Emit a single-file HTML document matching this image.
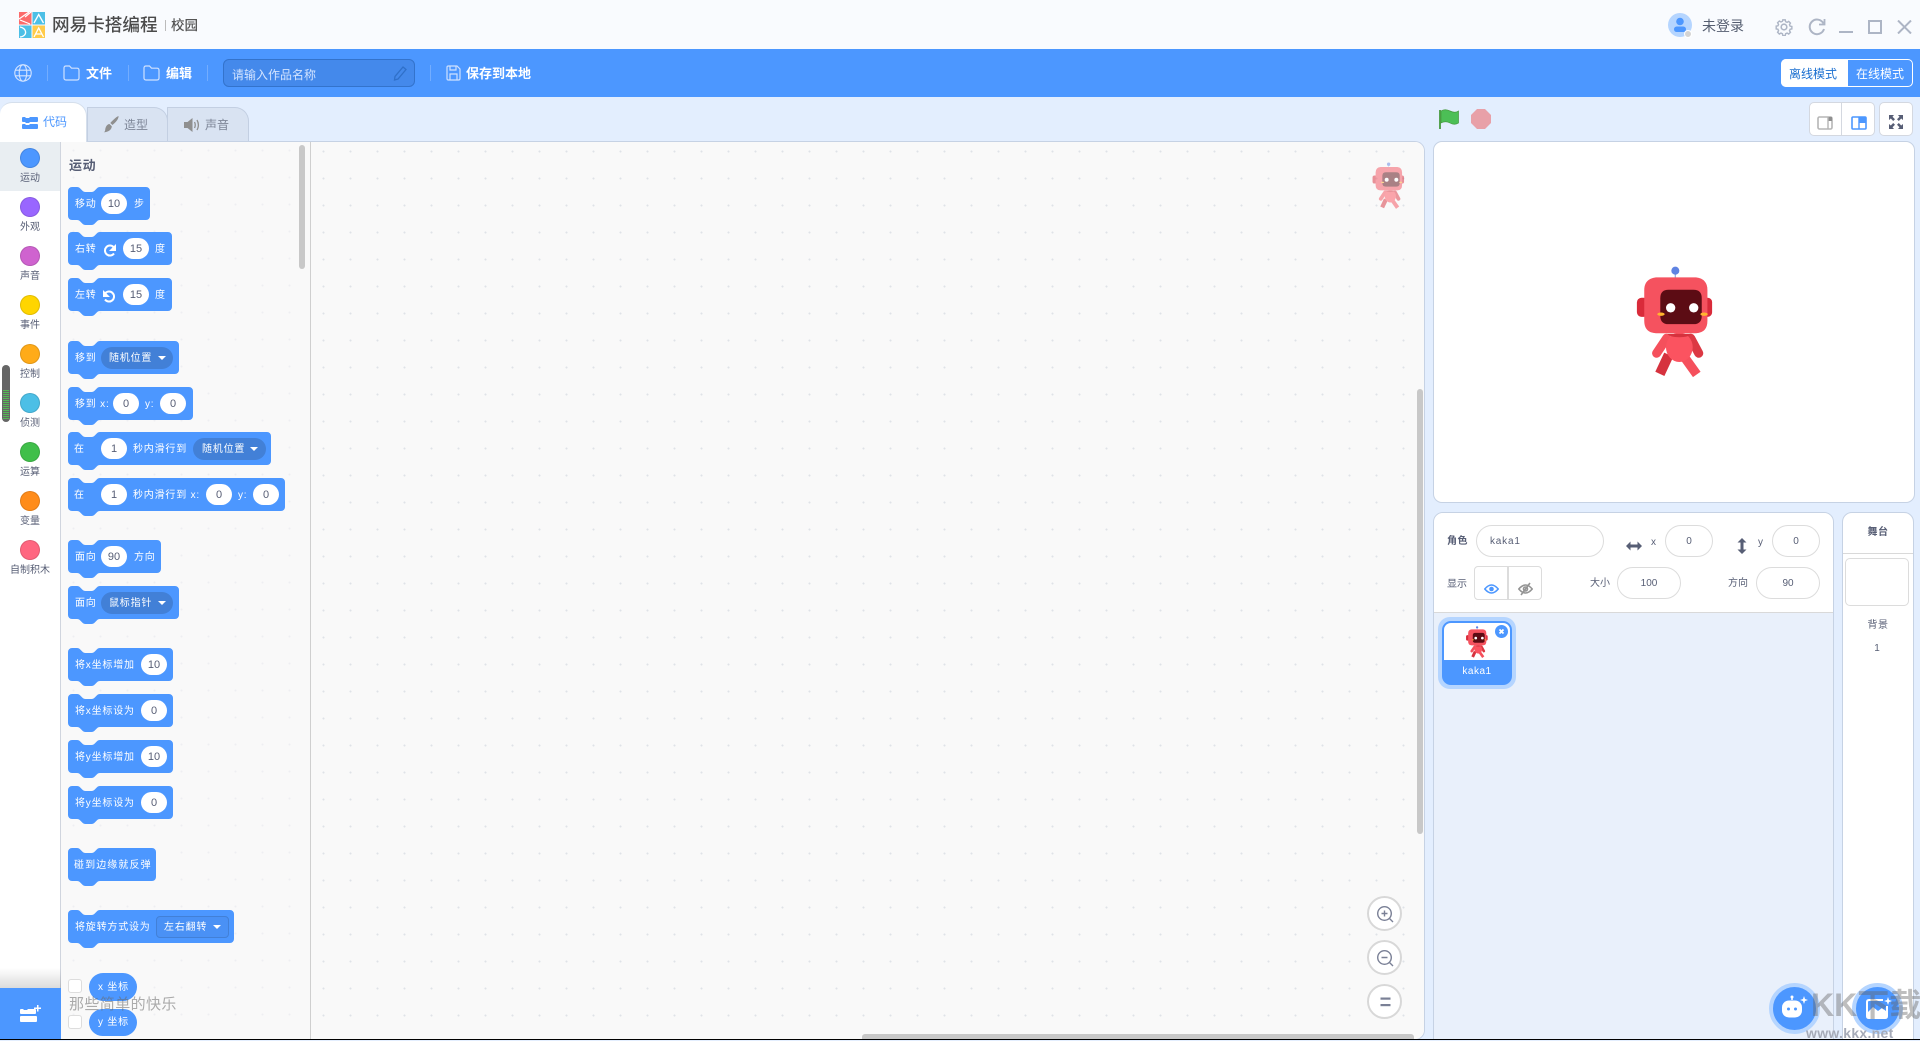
<!DOCTYPE html>
<html lang="zh"><head><meta charset="utf-8"><title>网易卡搭编程</title>
<style>
*{box-sizing:border-box}
html,body{margin:0;padding:0;width:1920px;height:1040px;overflow:hidden;background:#e3eefe;font-family:"Liberation Sans","WenQuanYi Zen Hei","Noto Sans CJK SC",sans-serif;color:#575e75}
.a,.t,.b,.i,.d,.s,svg{position:absolute}
.t{font-size:10px;line-height:12px;white-space:nowrap}
.b{left:68px;height:38px}
.b svg{left:0;top:0;overflow:visible}
.b .t{color:#fff;letter-spacing:.8px;top:12px}
.i{top:6px;height:21px;width:26px;background:#fff;border-radius:11px;color:#575e75;font-size:11px;line-height:22px;text-align:center}
.d{top:6px;height:22px;background:#4280d7;border-radius:11px}
.s{border-style:solid;border-width:4px 4px 0;border-color:#fff transparent transparent;top:15px}
.c{position:absolute;left:20px;width:20px;height:20px;border-radius:50%;border:1px solid rgba(0,0,0,.12)}
.l{position:absolute;left:0;width:60px;text-align:center;font-size:10px;line-height:12px;color:#575e75}
.f{position:absolute;height:32px;border:1.5px solid #dcdcdc;border-radius:16px;background:#fff;font-size:10px;line-height:31px;text-align:center;color:#575e75}
.v{width:1px;height:16px;top:65px;background:rgba(255,255,255,.22);position:absolute}
.z{position:absolute;left:1367px;width:35px;height:35px;border-radius:50%;background:#fff;border:2px solid #d8d8d8}
</style></head><body>

<!-- hidden symbol -->
<svg width="0" height="0" style="position:absolute"><defs>
<symbol id="robot" viewBox="100 70 250 350">
<path d="M226 118V100" stroke="#9db2de" stroke-width="4"/><circle cx="226" cy="93" r="12" fill="#5f83e2"/>
<rect x="111" y="174" width="34" height="57" rx="14" fill="#d92b3a"/><rect x="305" y="174" width="31" height="57" rx="13" fill="#d92b3a"/>
<path d="M200 358L186 388" stroke="#d6323e" stroke-width="30" stroke-linecap="square"/>
<path d="M200 295L170 340" stroke="#f5505c" stroke-width="27" stroke-linecap="round"/>
<path d="M272 295L296 340" stroke="#dc3843" stroke-width="27" stroke-linecap="round"/>
<path d="M252 350L282 392" stroke="#f5505c" stroke-width="28" stroke-linecap="square"/>
<ellipse cx="238" cy="322" rx="40" ry="44" fill="#fb5360"/>
<path d="M202 282h72q-8 10-36 10t-36-10z" fill="#d6323e"/>
<path d="M168 113h120q34 4 34 38v92q0 35-34 37H168q-35-2-35-37v-92q0-34 35-38z" fill="#f5525f"/>
<path d="M206 150h74q25 0 25 25v53q0 25-25 25h-74q-25 0-25-25v-53q0-25 25-25z" fill="#5c0c14"/>
<circle cx="212" cy="204" r="14" fill="#fff"/><circle cx="281" cy="204" r="14" fill="#fff"/>
<ellipse cx="183" cy="223" rx="11" ry="5" fill="#ffb52e"/><ellipse cx="312" cy="223" rx="11" ry="5" fill="#ffb52e"/>
</symbol>
</defs></svg>

<!-- title bar -->
<div class="a" style="left:0;top:0;width:1920px;height:49px;background:#f9fbfe"></div>
<svg style="left:19px;top:12px" width="26" height="26" viewBox="0 0 26 26">
<rect width="12.5" height="12.5" fill="#fb6b6b"/><rect x="13.5" width="12.5" height="12.5" fill="#4cbfe6"/><rect y="13.5" width="12.5" height="12.5" fill="#4cbfe6"/><rect x="13.5" y="13.5" width="12.5" height="12.5" fill="#ffcb4a"/>
<path d="M0 7L10 0M1 8L11 12M6 5L12 0" stroke="#fff" stroke-width="1.2" fill="none"/>
<path d="M15 11L19.7 2.5L24.5 11" stroke="#fff" stroke-width="1.3" fill="none"/>
<path d="M1 15c7 1 8 9 0 10" stroke="#fff" stroke-width="1.3" fill="none"/>
<path d="M15 25L19.7 16L24.5 25M17 22h6" stroke="#fff" stroke-width="1.3" fill="none"/>
</svg>
<div class="t" style="left:52px;top:14px;font-size:17.6px;line-height:22px;font-weight:500;color:#4a4a4a;font-family:'Liberation Sans','Noto Sans CJK SC',sans-serif">网易卡搭编程</div>
<div class="a" style="left:165px;top:20px;width:1px;height:11px;background:#bbb"></div>
<div class="t" style="left:171px;top:18px;font-size:13.5px;line-height:16px;font-weight:500;color:#555;font-family:'Liberation Sans','Noto Sans CJK SC',sans-serif">校园</div>

<svg style="left:1668px;top:13px" width="26" height="26" viewBox="0 0 26 26"><circle cx="12" cy="12" r="12" fill="#b5d5ff"/><circle cx="12" cy="8.5" r="3.8" fill="#4c97ff"/><rect x="6" y="13.5" width="12" height="5.5" rx="2.7" fill="#4c97ff"/><circle cx="20" cy="21" r="3.5" fill="#d4d4d4" stroke="#fff"/></svg>
<div class="t" style="left:1702px;top:18px;font-size:14px;line-height:16px;color:#555e70">未登录</div>
<svg style="left:1775px;top:18px" width="18" height="18" viewBox="0 0 18 18" fill="none" stroke="#adb5c5" stroke-width="1.6"><circle cx="9" cy="9" r="2.8"/><path d="M7.6 1h2.8l.4 2 1.7.8 1.8-1.1 2 2-1.1 1.8.7 1.6 2 .4v2.8l-2 .4-.7 1.7 1.1 1.7-2 2-1.8-1.1-1.7.8-.4 2H7.6l-.4-2-1.7-.8-1.8 1.1-2-2 1.1-1.7-.7-1.7-2-.4V8.1l2-.4.7-1.6-1.1-1.8 2-2 1.8 1.1 1.7-.8z" transform="translate(1.1 1) scale(.88)"/></svg>
<svg style="left:1808px;top:18px" width="18" height="18" viewBox="0 0 18 18" fill="none" stroke="#adb5c5" stroke-width="2"><path d="M15.5 5.5A7.3 7.3 0 1 0 16 11"/><path d="M16.5 1v5.5H11" stroke-width="1.8"/></svg>
<div class="a" style="left:1839px;top:31px;width:14px;height:2px;background:#adb5c5"></div>
<div class="a" style="left:1868px;top:20px;width:14px;height:14px;border:2px solid #adb5c5"></div>
<svg style="left:1897px;top:20px" width="15" height="14" viewBox="0 0 15 14"><path d="M1 .5L14 13.5M14 .5L1 13.5" stroke="#adb5c5" stroke-width="2"/></svg>

<!-- toolbar -->
<div class="a" style="left:0;top:49px;width:1920px;height:48px;background:#4c97ff"></div>
<svg style="left:14px;top:64px" width="18" height="18" viewBox="0 0 18 18" fill="none" stroke="#d5e5ff" stroke-width="1.1"><circle cx="9" cy="9" r="8.2"/><ellipse cx="9" cy="9" rx="3.8" ry="8.2"/><path d="M1 6.2h16M1 11.8h16"/></svg>
<div class="v" style="left:47px"></div><div class="v" style="left:128px"></div><div class="v" style="left:207px"></div><div class="v" style="left:430px"></div>
<svg style="left:63px;top:65px" width="17" height="16" viewBox="0 0 17 16" fill="none" stroke="#cfe1ff" stroke-width="1.2"><path d="M1 3q0-2 2-2h3.500l2 2.200H14q2 0 2 2V13q0 2-2 2H3q-2 0-2-2z"/></svg>
<div class="t" style="left:86px;top:66px;font-size:13px;line-height:16px;font-weight:700;color:#fff">文件</div>
<svg style="left:143px;top:65px" width="17" height="16" viewBox="0 0 17 16" fill="none" stroke="#cfe1ff" stroke-width="1.2"><path d="M1 3q0-2 2-2h3.500l2 2.200H14q2 0 2 2V13q0 2-2 2H3q-2 0-2-2z"/></svg>
<div class="t" style="left:166px;top:66px;font-size:13px;line-height:16px;font-weight:700;color:#fff">编辑</div>
<div class="a" style="left:223px;top:59px;width:192px;height:28px;border-radius:6px;background:#4489eb;border:1px solid #3373cc"></div>
<div class="t" style="left:232px;top:68px;font-size:12px;line-height:14px;color:#d3e4ff">请输入作品名称</div>
<svg style="left:393px;top:66px" width="14" height="15" viewBox="0 0 14 15" fill="none" stroke="#2f70c9" stroke-width="1.3"><path d="M10 1l3 2.500L5 13l-3.500 1L2 10.400z"/></svg>
<svg style="left:446px;top:65px" width="15" height="16" viewBox="0 0 15 16" fill="none" stroke="#cfe1ff" stroke-width="1.2"><path d="M1 2.500q0-1.500 1.500-1.500H11l3 3v9.500q0 1.500-1.500 1.500h-10Q1 15 1 13.500zM4 1v4h6V1M4 15V9h7v6"/></svg>
<div class="t" style="left:466px;top:66px;font-size:13px;line-height:16px;font-weight:700;color:#fff">保存到本地</div>
<div class="a" style="left:1781px;top:59px;width:132px;height:28px;border:1px solid #fff;border-radius:5px;background:#4c97ff"></div>
<div class="a" style="left:1781px;top:59px;width:67px;height:28px;border-radius:5px 0 0 5px;background:#fff"></div>
<div class="t" style="left:1789px;top:67px;font-size:12px;line-height:14px;color:#1a6fd0">离线模式</div>
<div class="t" style="left:1856px;top:67px;font-size:12px;line-height:14px;color:#fff">在线模式</div>

<!-- tabs -->
<div class="a" style="left:167px;top:107px;width:82px;height:35px;background:#d9e3f2;border:1px solid #c3cfe2;border-bottom:0;border-radius:0 14px 0 0"></div>
<div class="a" style="left:87px;top:107px;width:81px;height:35px;background:#d9e3f2;border:1px solid #c3cfe2;border-bottom:0;border-radius:0 14px 0 0"></div>
<svg style="left:103px;top:116px" width="16" height="17" viewBox="0 0 16 17"><path d="M15.500 0c.5 3-3.500 7-6 9L7.300 7C9.500 4.500 13 1 15.500 0zM6.500 8l2.300 2.200c0 3-3 6-8 6 2-1 1-3 2-5 .7-1.600 2-3.200 3.700-3.200z" fill="#8f8f8f"/></svg>
<div class="t" style="left:124px;top:118px;font-size:12px;line-height:14px;color:#7d8597">造型</div>
<svg style="left:184px;top:117px" width="16" height="16" viewBox="0 0 16 16"><path d="M0 5h3.500L8.500 1v14l-5-4H0z" fill="#8f8f8f"/><path d="M10.500 5q1.500 3 0 6M13 3q2.800 5 0 10" stroke="#8f8f8f" stroke-width="1.300" fill="none"/></svg>
<div class="t" style="left:205px;top:118px;font-size:12px;line-height:14px;color:#7d8597">声音</div>

<!-- main left box -->
<div class="a" style="left:0;top:141px;width:1425px;height:899px;background:#fff;border:1px solid #c6d2e4;border-left:0;border-radius:0 10px 10px 0;overflow:hidden">
 <div class="a" style="left:60px;top:0;width:251px;height:900px;background-color:#f9f9f9;background-image:radial-gradient(circle,#eeeff2 .8px,transparent 1.2px);background-size:27px 27px;background-position:-1px -5px;border-left:1px solid #d0d5de;border-right:1px solid #cfcfcf"></div>
 <div class="a" style="left:310px;top:0;width:1114px;height:900px;background-color:#f9f9f9;background-image:radial-gradient(circle,#dfe2e8 .8px,transparent 1.200px);background-size:27px 27px;background-position:-1px -4px;border-left:1px solid #cfcfcf"></div>
</div>

<!-- active tab -->
<div class="a" style="left:0;top:102px;width:87px;height:40px;background:#fff;border:1px solid #d5dfec;border-left:0;border-bottom:0;border-radius:12px 14px 0 0"></div>
<svg style="left:22px;top:117px" width="16" height="12" viewBox="0 0 16 12" fill="#4c97ff"><path d="M0 1q0-1 1-1h2l1 1h3l1-1h7q1 0 1 1v3q0 1-1 1H8l-1 1H4L3 5H1Q0 5 0 4z"/><path d="M0 8q0-1 1-1h2l1 1h3l1-1h7q1 0 1 1v3q0 1-1 1H1q-1 0-1-1z"/></svg>
<div class="t" style="left:43px;top:115px;font-size:12px;line-height:14px;color:#4c97ff">代码</div>

<!-- stage controls -->
<svg style="left:1439px;top:108px" width="21" height="22" viewBox="0 0 21 22"><path d="M1 2v19" stroke="#45993d" stroke-width="1.800"/><path d="M2 3q4-2.500 9 0t8.500 0V15q-4 2.500-8.500 0T2 15z" fill="#4cbf56" stroke="#45993d" stroke-width=".7"/></svg>
<svg style="left:1471px;top:109px" width="20" height="20" viewBox="0 0 20 20"><path d="M6 0h8l6 6v8l-6 6H6l-6-6V6z" fill="#e8a0a8"/></svg>
<div class="a" style="left:1809px;top:102px;width:66px;height:34px;background:#fff;border:1px solid #d4d8e0;border-radius:5px"></div>
<div class="a" style="left:1841px;top:102px;width:1px;height:34px;background:#d4d8e0"></div>
<div class="a" style="left:1879px;top:102px;width:34px;height:34px;background:#fff;border:1px solid #d4d8e0;border-radius:5px"></div>
<svg style="left:1817px;top:116px" width="16" height="14" viewBox="0 0 16 14"><rect x="1" y="1" width="14" height="12" rx="1.500" fill="none" stroke="#b5b5b5" stroke-width="1.600"/><rect x="11" y="1" width="4" height="4" fill="#8f8f8f"/><path d="M11 1v12" stroke="#b5b5b5" stroke-width="1.400"/></svg>
<svg style="left:1851px;top:116px" width="16" height="14" viewBox="0 0 16 14"><rect x="1" y="1" width="14" height="12" rx="1" fill="#fff" stroke="#4c97ff" stroke-width="1.600"/><rect x="8" y="1" width="7" height="6" fill="#4c97ff"/><path d="M8 1v12" stroke="#4c97ff" stroke-width="1.400"/></svg>
<svg style="left:1889px;top:115px" width="14" height="14" viewBox="0 0 14 14" fill="#575e75"><path d="M0 0h5L3.500 1.800 6 4.200 4.200 6 1.800 3.500 0 5zM14 0v5L12.200 3.500 9.800 6 8 4.200l2.500-2.400L9 0zM0 14V9l1.800 1.500L4.200 8 6 9.800l-2.500 2.400L5 14zM14 14H9l1.500-1.800L8 9.800 9.800 8l2.400 2.500L14 9z"/></svg>

<!-- sidebar -->
<div class="a" style="left:0;top:142px;width:60px;height:49px;background:#e9eef2"></div>
<div class="c" style="top:148px;background:#4c97ff"></div><div class="l" style="top:173px">运动</div>
<div class="c" style="top:197px;background:#9966ff"></div><div class="l" style="top:222px">外观</div>
<div class="c" style="top:246px;background:#cf63cf"></div><div class="l" style="top:271px">声音</div>
<div class="c" style="top:295px;background:#ffd500"></div><div class="l" style="top:320px">事件</div>
<div class="c" style="top:344px;background:#ffab19"></div><div class="l" style="top:369px">控制</div>
<div class="c" style="top:393px;background:#4cbfe6"></div><div class="l" style="top:418px">侦测</div>
<div class="c" style="top:442px;background:#40bf4a"></div><div class="l" style="top:467px">运算</div>
<div class="c" style="top:491px;background:#ff8c1a"></div><div class="l" style="top:516px">变量</div>
<div class="c" style="top:540px;background:#ff6680"></div><div class="l" style="top:565px">自制积木</div>
<div class="a" style="left:2px;top:365px;width:8px;height:57px;border-radius:4px;background:#666;overflow:hidden"><div style="position:absolute;left:1px;right:1px;top:25px;height:29px;background:repeating-linear-gradient(#56b856 0 1px,#666 1px 2px)"></div></div>
<div class="a" style="left:0;top:968px;width:61px;height:20px;background:linear-gradient(rgba(0,0,0,0),rgba(0,0,0,.14))"></div>
<div class="a" style="left:0;top:988px;width:61px;height:51px;background:#4c97ff"></div>
<svg style="left:19px;top:1005px" width="23" height="20" viewBox="0 0 23 20" fill="#fff"><path d="M1 5q0-1 1-1h2l1 1h3l1-1h7q1 0 1 1v3q0 1-1 1H2Q1 9 1 8zM1 12q0-1 1-1h15q1 0 1 1v4q0 1-1 1H2q-1 0-1-1z"/><path d="M17 3h3V0h1.500v3H24v1.500h-2.500V7H20V4.500h-3z" transform="translate(-2 -.5)"/></svg>

<!-- palette -->
<div class="a" style="left:299px;top:145px;width:6px;height:124px;background:#c8c8c8;border-radius:3px"></div>
<div class="t" style="left:69px;top:158px;font-size:13px;line-height:16px;font-weight:700;color:#575e75;letter-spacing:.6px">运动</div>

<div class="b" style="top:187px"><svg width="82" height="38"><path fill="#4c97ff" d="M0 4a4 4 0 0 1 4-4h5c1.500 0 2.300.6 3 1.300l2.500 2.500c.8.8 1.500 1.200 3 1.200h6c1.500 0 2.200-.4 3-1.200l2.500-2.500C29.700.6 30.500 0 32 0H78a4 4 0 0 1 4 4v25a4 4 0 0 1-4 4H32c-1.500 0-2.300.6-3 1.300l-2.500 2.500c-.8.8-1.500 1.200-3 1.200h-6c-1.500 0-2.200-.4-3-1.200l-2.500-2.500C11.300 33.600 10.500 33 9 33H4a4 4 0 0 1-4-4z"/></svg>
<div class="t" style="left:7px">移动</div><div class="i" style="left:33px">10</div><div class="t" style="left:66px">步</div></div>

<div class="b" style="top:232px"><svg width="104" height="38"><path fill="#4c97ff" d="M0 4a4 4 0 0 1 4-4h5c1.500 0 2.300.6 3 1.300l2.500 2.500c.8.8 1.500 1.200 3 1.200h6c1.500 0 2.200-.4 3-1.200l2.500-2.500C29.700.6 30.500 0 32 0H100a4 4 0 0 1 4 4v25a4 4 0 0 1-4 4H32c-1.500 0-2.300.6-3 1.300l-2.500 2.500c-.8.8-1.500 1.200-3 1.200h-6c-1.500 0-2.200-.4-3-1.200l-2.500-2.500C11.300 33.600 10.500 33 9 33H4a4 4 0 0 1-4-4z"/><path d="M45.500 15A5 5 0 1 0 46 21.500" fill="none" stroke="#fff" stroke-width="2"/><path d="M48 12v7h-7z" fill="#fff"/></svg>
<div class="t" style="left:7px">右转</div><div class="i" style="left:55px">15</div><div class="t" style="left:87px">度</div></div>

<div class="b" style="top:278px"><svg width="104" height="38"><path fill="#4c97ff" d="M0 4a4 4 0 0 1 4-4h5c1.500 0 2.300.6 3 1.300l2.500 2.500c.8.8 1.500 1.200 3 1.200h6c1.500 0 2.200-.4 3-1.200l2.500-2.500C29.700.6 30.500 0 32 0H100a4 4 0 0 1 4 4v25a4 4 0 0 1-4 4H32c-1.500 0-2.300.6-3 1.300l-2.500 2.500c-.8.8-1.500 1.200-3 1.200h-6c-1.500 0-2.200-.4-3-1.200l-2.500-2.500C11.300 33.600 10.500 33 9 33H4a4 4 0 0 1-4-4z"/><path d="M37.500 15A5 5 0 1 1 37 21.500" fill="none" stroke="#fff" stroke-width="2"/><path d="M35 12v7h7z" fill="#fff"/></svg>
<div class="t" style="left:7px">左转</div><div class="i" style="left:55px">15</div><div class="t" style="left:87px">度</div></div>

<div class="b" style="top:341px"><svg width="111" height="38"><path fill="#4c97ff" d="M0 4a4 4 0 0 1 4-4h5c1.500 0 2.300.6 3 1.300l2.500 2.500c.8.8 1.500 1.200 3 1.200h6c1.500 0 2.200-.4 3-1.200l2.500-2.500C29.700.6 30.500 0 32 0H107a4 4 0 0 1 4 4v25a4 4 0 0 1-4 4H32c-1.500 0-2.300.6-3 1.300l-2.500 2.500c-.8.8-1.500 1.200-3 1.200h-6c-1.500 0-2.200-.4-3-1.200l-2.500-2.500C11.300 33.600 10.500 33 9 33H4a4 4 0 0 1-4-4z"/></svg>
<div class="t" style="left:7px">移到</div><div class="d" style="left:33px;width:72px"></div><div class="t" style="left:41px">随机位置</div><div class="s" style="left:90px"></div></div>

<div class="b" style="top:387px"><svg width="125" height="38"><path fill="#4c97ff" d="M0 4a4 4 0 0 1 4-4h5c1.500 0 2.300.6 3 1.300l2.500 2.500c.8.8 1.500 1.200 3 1.200h6c1.500 0 2.200-.4 3-1.200l2.500-2.500C29.700.6 30.500 0 32 0H121a4 4 0 0 1 4 4v25a4 4 0 0 1-4 4H32c-1.500 0-2.300.6-3 1.300l-2.500 2.500c-.8.8-1.500 1.200-3 1.200h-6c-1.500 0-2.200-.4-3-1.200l-2.500-2.500C11.300 33.600 10.500 33 9 33H4a4 4 0 0 1-4-4z"/></svg>
<div class="t" style="left:7px">移到 x:</div><div class="i" style="left:45px">0</div><div class="t" style="left:77px">y:</div><div class="i" style="left:92px">0</div></div>

<div class="b" style="top:432px"><svg width="203" height="38"><path fill="#4c97ff" d="M0 4a4 4 0 0 1 4-4h5c1.500 0 2.300.6 3 1.300l2.500 2.500c.8.8 1.500 1.200 3 1.200h6c1.500 0 2.200-.4 3-1.200l2.500-2.500C29.700.6 30.500 0 32 0H199a4 4 0 0 1 4 4v25a4 4 0 0 1-4 4H32c-1.500 0-2.300.6-3 1.300l-2.500 2.500c-.8.8-1.500 1.200-3 1.200h-6c-1.500 0-2.200-.4-3-1.200l-2.500-2.500C11.300 33.600 10.500 33 9 33H4a4 4 0 0 1-4-4z"/></svg>
<div class="t" style="left:6px">在</div><div class="i" style="left:33px">1</div><div class="t" style="left:65px">秒内滑行到</div><div class="d" style="left:125px;width:73px"></div><div class="t" style="left:134px">随机位置</div><div class="s" style="left:182px"></div></div>

<div class="b" style="top:478px"><svg width="217" height="38"><path fill="#4c97ff" d="M0 4a4 4 0 0 1 4-4h5c1.500 0 2.300.6 3 1.300l2.500 2.500c.8.8 1.500 1.200 3 1.200h6c1.500 0 2.200-.4 3-1.200l2.500-2.500C29.700.6 30.500 0 32 0H213a4 4 0 0 1 4 4v25a4 4 0 0 1-4 4H32c-1.500 0-2.300.6-3 1.300l-2.500 2.500c-.8.8-1.500 1.200-3 1.200h-6c-1.500 0-2.200-.4-3-1.200l-2.500-2.500C11.300 33.600 10.500 33 9 33H4a4 4 0 0 1-4-4z"/></svg>
<div class="t" style="left:6px">在</div><div class="i" style="left:33px">1</div><div class="t" style="left:65px">秒内滑行到 x:</div><div class="i" style="left:138px">0</div><div class="t" style="left:170px">y:</div><div class="i" style="left:185px">0</div></div>

<div class="b" style="top:540px"><svg width="93" height="38"><path fill="#4c97ff" d="M0 4a4 4 0 0 1 4-4h5c1.500 0 2.300.6 3 1.300l2.500 2.500c.8.8 1.500 1.200 3 1.200h6c1.500 0 2.200-.4 3-1.200l2.500-2.500C29.700.6 30.500 0 32 0H89a4 4 0 0 1 4 4v25a4 4 0 0 1-4 4H32c-1.500 0-2.300.6-3 1.300l-2.500 2.500c-.8.8-1.500 1.200-3 1.200h-6c-1.500 0-2.200-.4-3-1.200l-2.500-2.500C11.300 33.600 10.500 33 9 33H4a4 4 0 0 1-4-4z"/></svg>
<div class="t" style="left:7px">面向</div><div class="i" style="left:33px">90</div><div class="t" style="left:66px">方向</div></div>

<div class="b" style="top:586px"><svg width="111" height="38"><path fill="#4c97ff" d="M0 4a4 4 0 0 1 4-4h5c1.500 0 2.300.6 3 1.300l2.500 2.500c.8.8 1.500 1.200 3 1.200h6c1.500 0 2.200-.4 3-1.200l2.500-2.500C29.700.6 30.500 0 32 0H107a4 4 0 0 1 4 4v25a4 4 0 0 1-4 4H32c-1.500 0-2.300.6-3 1.300l-2.500 2.500c-.8.8-1.500 1.200-3 1.200h-6c-1.500 0-2.200-.4-3-1.200l-2.500-2.500C11.300 33.600 10.500 33 9 33H4a4 4 0 0 1-4-4z"/></svg>
<div class="t" style="left:7px">面向</div><div class="d" style="left:33px;width:72px"></div><div class="t" style="left:41px">鼠标指针</div><div class="s" style="left:90px"></div></div>

<div class="b" style="top:648px"><svg width="105" height="38"><path fill="#4c97ff" d="M0 4a4 4 0 0 1 4-4h5c1.500 0 2.300.6 3 1.300l2.500 2.500c.8.8 1.500 1.200 3 1.200h6c1.500 0 2.200-.4 3-1.200l2.500-2.500C29.700.6 30.500 0 32 0H101a4 4 0 0 1 4 4v25a4 4 0 0 1-4 4H32c-1.500 0-2.300.6-3 1.300l-2.500 2.500c-.8.8-1.500 1.200-3 1.200h-6c-1.500 0-2.200-.4-3-1.200l-2.500-2.500C11.300 33.600 10.500 33 9 33H4a4 4 0 0 1-4-4z"/></svg>
<div class="t" style="left:7px">将x坐标增加</div><div class="i" style="left:73px">10</div></div>

<div class="b" style="top:694px"><svg width="105" height="38"><path fill="#4c97ff" d="M0 4a4 4 0 0 1 4-4h5c1.500 0 2.300.6 3 1.300l2.500 2.500c.8.8 1.500 1.200 3 1.200h6c1.500 0 2.200-.4 3-1.200l2.500-2.500C29.700.6 30.500 0 32 0H101a4 4 0 0 1 4 4v25a4 4 0 0 1-4 4H32c-1.500 0-2.300.6-3 1.300l-2.500 2.500c-.8.8-1.500 1.200-3 1.200h-6c-1.500 0-2.200-.4-3-1.200l-2.500-2.500C11.300 33.600 10.500 33 9 33H4a4 4 0 0 1-4-4z"/></svg>
<div class="t" style="left:7px">将x坐标设为</div><div class="i" style="left:73px">0</div></div>

<div class="b" style="top:740px"><svg width="105" height="38"><path fill="#4c97ff" d="M0 4a4 4 0 0 1 4-4h5c1.500 0 2.300.6 3 1.300l2.500 2.500c.8.8 1.500 1.200 3 1.200h6c1.500 0 2.200-.4 3-1.200l2.500-2.500C29.700.6 30.500 0 32 0H101a4 4 0 0 1 4 4v25a4 4 0 0 1-4 4H32c-1.500 0-2.300.6-3 1.300l-2.500 2.500c-.8.8-1.500 1.200-3 1.200h-6c-1.500 0-2.200-.4-3-1.200l-2.500-2.500C11.300 33.600 10.500 33 9 33H4a4 4 0 0 1-4-4z"/></svg>
<div class="t" style="left:7px">将y坐标增加</div><div class="i" style="left:73px">10</div></div>

<div class="b" style="top:786px"><svg width="105" height="38"><path fill="#4c97ff" d="M0 4a4 4 0 0 1 4-4h5c1.500 0 2.300.6 3 1.300l2.500 2.500c.8.8 1.500 1.200 3 1.200h6c1.500 0 2.200-.4 3-1.200l2.500-2.500C29.700.6 30.500 0 32 0H101a4 4 0 0 1 4 4v25a4 4 0 0 1-4 4H32c-1.500 0-2.300.6-3 1.300l-2.500 2.500c-.8.8-1.500 1.200-3 1.200h-6c-1.500 0-2.200-.4-3-1.200l-2.500-2.500C11.300 33.600 10.500 33 9 33H4a4 4 0 0 1-4-4z"/></svg>
<div class="t" style="left:7px">将y坐标设为</div><div class="i" style="left:73px">0</div></div>

<div class="b" style="top:848px"><svg width="88" height="38"><path fill="#4c97ff" d="M0 4a4 4 0 0 1 4-4h5c1.500 0 2.300.6 3 1.300l2.500 2.500c.8.8 1.500 1.200 3 1.200h6c1.500 0 2.200-.4 3-1.200l2.500-2.500C29.700.6 30.500 0 32 0H84a4 4 0 0 1 4 4v25a4 4 0 0 1-4 4H32c-1.500 0-2.300.6-3 1.300l-2.500 2.500c-.8.8-1.500 1.200-3 1.200h-6c-1.500 0-2.200-.4-3-1.200l-2.500-2.500C11.300 33.600 10.500 33 9 33H4a4 4 0 0 1-4-4z"/></svg>
<div class="t" style="left:6px;letter-spacing:1.100px">碰到边缘就反弹</div></div>

<div class="b" style="top:910px"><svg width="166" height="38"><path fill="#4c97ff" d="M0 4a4 4 0 0 1 4-4h5c1.500 0 2.300.6 3 1.300l2.500 2.500c.8.8 1.500 1.200 3 1.200h6c1.500 0 2.200-.4 3-1.200l2.500-2.500C29.700.6 30.500 0 32 0H162a4 4 0 0 1 4 4v25a4 4 0 0 1-4 4H32c-1.500 0-2.300.6-3 1.300l-2.500 2.500c-.8.8-1.500 1.200-3 1.200h-6c-1.500 0-2.200-.4-3-1.200l-2.500-2.500C11.300 33.600 10.500 33 9 33H4a4 4 0 0 1-4-4z"/></svg>
<div class="t" style="left:7px">将旋转方式设为</div><div class="d" style="left:88px;width:73px;border-radius:4px;background:#4a91f5;border:1px solid #4280d7"></div><div class="t" style="left:96px">左右翻转</div><div class="s" style="left:145px"></div></div>

<div class="a" style="left:68px;top:979px;width:14px;height:14px;background:#fff;border:1px solid #ddd;border-radius:3px"></div>
<div class="a" style="left:89px;top:973px;width:48px;height:28px;background:#4c97ff;border-radius:14px"></div>
<div class="t" style="left:98px;top:982px;color:#fff;letter-spacing:.8px">x 坐标</div>
<div class="a" style="left:68px;top:1015px;width:14px;height:14px;background:#fff;border:1px solid #ddd;border-radius:3px"></div>
<div class="a" style="left:89px;top:1009px;width:48px;height:27px;background:#4c97ff;border-radius:14px"></div>
<div class="t" style="left:98px;top:1017px;color:#fff;letter-spacing:.8px">y 坐标</div>
<div class="t" style="left:69px;top:996px;font-size:15px;line-height:18px;letter-spacing:.4px;color:rgba(105,105,105,.55);font-family:'Liberation Sans','Noto Sans CJK SC',sans-serif">那些简单的快乐</div>

<!-- workspace extras -->
<svg style="left:1371px;top:161px;opacity:.5" width="35" height="49" viewBox="0 0 250 350"><use href="#robot" width="250" height="350"/></svg>
<div class="a" style="left:1417px;top:389px;width:6px;height:445px;background:#c8c8c8;border-radius:3px"></div>
<div class="a" style="left:862px;top:1034px;width:552px;height:5px;background:#c8c8c8;border-radius:3px 3px 0 0"></div>
<div class="z" style="top:896px"></div><div class="z" style="top:940px"></div><div class="z" style="top:984px"></div>
<svg style="left:1376px;top:905px" width="19" height="19" viewBox="0 0 19 19" fill="none" stroke="#7a8096" stroke-width="1.400"><circle cx="8.500" cy="8.500" r="6.800"/><path d="M13.500 13.500l3.500 3.500M5.500 8.500h6M8.500 5.500v6"/></svg>
<svg style="left:1376px;top:949px" width="19" height="19" viewBox="0 0 19 19" fill="none" stroke="#7a8096" stroke-width="1.400"><circle cx="8.500" cy="8.500" r="6.800"/><path d="M13.500 13.500l3.500 3.500M5.500 8.500h6"/></svg>
<svg style="left:1376px;top:993px" width="19" height="19" viewBox="0 0 19 19" fill="#7a8096"><rect x="4.500" y="4.500" width="10" height="2.200"/><rect x="4.500" y="11" width="10" height="2.200"/></svg>

<!-- stage -->
<div class="a" style="left:1433px;top:141px;width:482px;height:362px;background:#fff;border:1px solid #c6d2e4;border-radius:9px"></div>
<svg style="left:1633px;top:263px" width="84" height="117" viewBox="0 0 250 350"><use href="#robot" width="250" height="350"/></svg>

<!-- sprite panel -->
<div class="a" style="left:1433px;top:512px;width:401px;height:528px;background:#e9f0fb;border:1px solid #c6d2e4;border-radius:10px 10px 0 0;overflow:hidden"><div class="a" style="left:0;top:0;right:0;height:100px;background:#fff;border-bottom:1px solid #d9d9d9"></div></div>
<div class="t" style="left:1447px;top:536px;font-weight:700;letter-spacing:.5px">角色</div>
<div class="f" style="left:1476px;top:525px;width:128px;text-align:left;padding-left:13px;letter-spacing:.8px">kaka1</div>
<svg style="left:1626px;top:541px" width="16" height="10" viewBox="0 0 16 10" fill="#575e75"><path d="M0 5l4.500-4.500V3.500h7V.5L16 5l-4.500 4.500V6.500h-7v3z"/></svg>
<div class="t" style="left:1651px;top:537px">x</div>
<div class="f" style="left:1665px;top:525px;width:48px">0</div>
<svg style="left:1737px;top:538px" width="10" height="16" viewBox="0 0 10 16" fill="#575e75"><path d="M5 0l4.500 4.500H6.500v7h3L5 16 .5 11.500h3v-7h-3z"/></svg>
<div class="t" style="left:1758px;top:537px">y</div>
<div class="f" style="left:1772px;top:525px;width:48px">0</div>
<div class="t" style="left:1447px;top:579px">显示</div>
<div class="a" style="left:1474px;top:566px;width:68px;height:34px;background:#fff;border:1.500px solid #dcdcdc;border-radius:4px"></div>
<div class="a" style="left:1507px;top:566px;width:2px;height:34px;background:#dcdcdc"></div>
<svg style="left:1484px;top:583px" width="15" height="12" viewBox="0 0 15 12" fill="none"><path d="M.8 6Q7.500-2 14.200 6 7.500 14 .8 6z" stroke="#4c97ff" stroke-width="1.600"/><circle cx="7.500" cy="6" r="2.300" fill="#4c97ff"/></svg>
<svg style="left:1518px;top:582px" width="15" height="14" viewBox="0 0 15 14" fill="none" stroke="#949494" stroke-width="1.600"><path d="M.8 7Q7.500-1 14.200 7 7.500 15 .8 7z"/><circle cx="7.500" cy="7" r="2"/><path d="M12 1L3 13"/></svg>
<div class="t" style="left:1590px;top:578px">大小</div>
<div class="f" style="left:1617px;top:567px;width:64px">100</div>
<div class="t" style="left:1728px;top:578px">方向</div>
<div class="f" style="left:1756px;top:567px;width:64px">90</div>

<!-- sprite thumb -->
<div class="a" style="left:1438px;top:617px;width:78px;height:72px;background:#b5d5ff;border-radius:12px"></div>
<div class="a" style="left:1442px;top:621px;width:70px;height:64px;background:#4c97ff;border-radius:9px"></div>
<div class="a" style="left:1444px;top:623px;width:66px;height:37px;background:#fff;border-radius:7px 7px 0 0"></div>
<svg style="left:1465px;top:625px" width="24" height="34" viewBox="0 0 250 350"><use href="#robot" width="250" height="350"/></svg>
<div class="a" style="left:1495px;top:625px;width:13px;height:13px;background:#4c97ff;border-radius:50%"></div>
<svg style="left:1495px;top:625px" width="13" height="13" viewBox="0 0 13 13"><path d="M4.500 4.500l4 4M8.500 4.500l-4 4" stroke="#fff" stroke-width="1.800"/></svg>
<div class="t" style="left:1442px;top:666px;width:70px;text-align:center;color:#fff;letter-spacing:.5px">kaka1</div>

<!-- stage panel -->
<div class="a" style="left:1842px;top:512px;width:72px;height:528px;background:#fff;border:1px solid #c6d2e4;border-radius:10px 10px 0 0"></div>
<div class="a" style="left:1843px;top:553px;width:70px;height:1px;background:#d9d9d9"></div>
<div class="t" style="left:1842px;top:527px;width:72px;text-align:center;font-weight:700;letter-spacing:.5px">舞台</div>
<div class="a" style="left:1845px;top:558px;width:64px;height:48px;background:#fff;border:1.500px solid #dcdcdc;border-radius:5px"></div>
<div class="t" style="left:1842px;top:620px;width:72px;text-align:center;letter-spacing:.5px">背景</div>
<div class="t" style="left:1842px;top:643px;width:70px;text-align:center">1</div>

<!-- AI buttons -->
<div class="a" style="left:1769px;top:983px;width:51px;height:51px;border-radius:50%;background:#4c97ff;border:4px solid #b5d5ff"></div>
<div class="a" style="left:1852px;top:983px;width:51px;height:51px;border-radius:50%;background:#4c97ff;border:4px solid #b5d5ff"></div>
<svg style="left:1780px;top:995px" width="30" height="26" viewBox="0 0 30 26"><path d="M12 5V2" stroke="#fff" stroke-width="1.500"/><circle cx="12" cy="2" r="1.500" fill="#fff"/><rect x="2" y="5.500" width="20" height="17" rx="7" fill="#fff"/><circle cx="8.500" cy="14" r="1.500" fill="#4c97ff"/><circle cx="15.500" cy="14" r="1.500" fill="#4c97ff"/><path d="M24 1l1 3 3 1-3 1-1 3-1-3-3-1 3-1z" fill="#fff"/></svg>
<svg style="left:1865px;top:996px" width="30" height="26" viewBox="0 0 30 26" fill="none"><path d="M18 4H4Q2 4 2 6v14q0 2 2 2h16q2 0 2-2V10" stroke="#fff" stroke-width="2"/><path d="M3 21v-5l5-5 5 4 4-3 4 3v6z" fill="#fff"/><path d="M23 1l1 3 3 1-3 1-1 3-1-3-3-1 3-1z" fill="#fff"/></svg>

<!-- watermark -->
<div class="t" style="left:1811px;top:986px;font-size:32px;line-height:38px;font-weight:700;color:rgba(100,100,100,.42);font-family:'Liberation Sans','Noto Sans CJK SC',sans-serif">KK下载</div>
<div class="t" style="left:1806px;top:1026px;font-size:14px;line-height:14px;font-weight:700;letter-spacing:.3px;color:#a6abb8">www.kkx.net</div>

<div class="a" style="left:0;top:1039px;width:1920px;height:1px;background:#000"></div>
</body></html>
